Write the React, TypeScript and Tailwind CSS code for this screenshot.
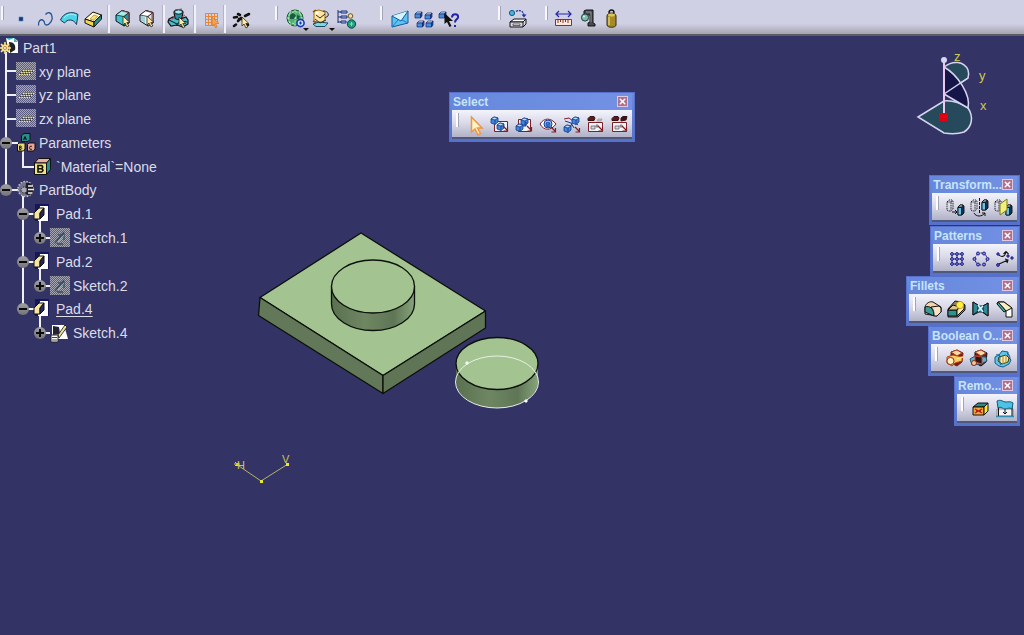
import { useState, type ReactNode } from 'react';
import { X } from 'lucide-react';

function Tool({ label, children }: { label: string; children: ReactNode }) {
  return (
    <button type="button" aria-label={label} className="w-6 h-6 shrink-0 hover:bg-white/40">
      <svg viewBox="0 0 24 24" className="w-6 h-6 overflow-visible" fill="none" stroke="#111" strokeWidth="1">
        {children}
      </svg>
    </button>
  );
}

function Grip() {
  return <div className="w-[3px] h-3.5 mt-1 self-start shrink-0 bg-[#f6f6fc] border-r border-[#a4a4b8]" />;
}

function Divider() {
  return <div className="w-[3px] h-7 shrink-0 bg-[#f0f0f8] border-l border-[#b4b4c4]" />;
}

function Cursor({ x, y, fill = '#ffe9a8' }: { x: number; y: number; fill?: string }) {
  return (
    <path
      transform={`translate(${x} ${y})`}
      d="M0 0v9l2-2 2 4 1.800-1-2-3.500h3z"
      fill={fill}
      stroke="#332a10"
      strokeWidth=".8"
    />
  );
}

function Cube({ x, y, fill = '#3f8fe0' }: { x: number; y: number; fill?: string }) {
  return (
    <g transform={`translate(${x} ${y})`} stroke="#14246e" strokeWidth=".7">
      <path d="M0 2l2-2h5l-1.500 2z" fill="#c8ecfc" />
      <path d="M0 2h5.500v4H0z" fill={fill} />
      <path d="M5.500 2L7 0v4L5.500 6z" fill="#1d4aa8" />
    </g>
  );
}

// small faceted cube, smaller and rounder than the component cubes
function Gem({ x, y }: { x: number; y: number }) {
  return (
    <g transform={`translate(${x} ${y})`} stroke="#173a8c" strokeWidth=".8">
      <path d="M0 2l3-2 4 1v4L4 7.500 0 6z" fill="#3c86dc" />
      <path d="M0 2l3-2 4 1-3 2z" fill="#b8dcf8" />
      <path d="M4 3v4.500" />
    </g>
  );
}

function MainToolbar() {
  return (
    <header className="h-9 w-full overflow-hidden flex items-start bg-linear-to-b from-[#d0d0e4] from-70% to-[#a4a4b0] border-b-2 border-[#5c5c64]">
      <div className="flex items-center h-9 pl-px pt-0.5">
        <Grip />
        <div className="flex ml-[5px] mr-0.5">
          <Tool label="Point">
            <path d="M10 10h4v4h-4z" fill="#15357a" stroke="#4c8cb8" strokeWidth=".6" />
          </Tool>
          <Tool label="Curve">
            <path d="M5.500 18.500C5 14 8 11.500 10.300 13.500S10.500 18 13.500 18s7-5 5.300-9.500C18 5.500 15 4.500 12.500 7.500" stroke="#244f92" strokeWidth="1.300" />
          </Tool>
          <Tool label="Surface">
            <path d="M3.500 13C6 6 15 3.500 21 7.500l-1.500 10C16.500 11.500 10 12 7.500 16z" fill="#4fd5ea" stroke="#163b58" />
            <path d="M7 11c3-4 8-5 12-2.500" stroke="#b5f4fa" />
          </Tool>
          <Tool label="Volume">
            <path d="M4 12l8-7 8.500 3-7.500 7z" fill="#fff7cc" />
            <path d="M4 12l9 3v5l-9-4z" fill="#f4d84a" />
            <path d="M13 15l7.500-7v4L13 20z" fill="#2f8f8c" />
            <path d="M9 12l4-4 3.500 1.300-3.500 4z" fill="#f5df70" stroke="#95782a" strokeWidth=".6" />
          </Tool>
        </div>
        <Divider />
        <div className="flex ml-px mr-[3px]">
          <Tool label="Select solid">
            <path d="M5 8l6-4.500 7 2V16l-5 3-8-5z" fill="#3fc3d0" />
            <path d="M5 8l6-4.500 7 2-5 4z" fill="#a4ecf0" strokeWidth=".7" />
            <path d="M13 9.500l5-4V16l-5 3z" fill="#2793a6" strokeWidth=".7" />
            <path d="M11 4l6 1.500v9" stroke="#b04048" strokeWidth=".8" />
            <Cursor x={12} y={9} />
          </Tool>
          <Tool label="Select element">
            <path d="M5 8l6-4.500 7 2V16l-5 3-8-5z" fill="#d4eef4" />
            <path d="M5 8l6-4.500 7 2-5 4z" fill="#fff" strokeWidth=".7" />
            <path d="M13 9.500l5-4V16l-5 3z" fill="#dcdce6" strokeWidth=".7" />
            <path d="M7 9v5M9 10v6" stroke="#56a4b0" strokeWidth=".8" />
            <path d="M11 4l6 1.500v9" stroke="#8c2830" strokeWidth=".8" />
            <Cursor x={12} y={9} />
          </Tool>
        </div>
        <Divider />
        <div className="flex ml-px mr-[3px]">
          <Tool label="Bodies">
            <path d="M3 12l4-2 7 2 6-2 2 3v4l-5 3-6-2-6 1-3-4z" fill="#48bccc" strokeWidth="1.200" />
            <path d="M3 13l8 4 4-3 6 1M11 17v2" />
            <path d="M8 5c1-3 8-3 9 0l-1 6c-2 2-6 2-7 0z" fill="#2c8fa8" strokeWidth="1.200" />
            <ellipse cx="12.500" cy="5" rx="4" ry="2.200" fill="#9cecf2" />
            <path d="M6 12l3-2M16 10l3-2M9 3l7-1" stroke="#b04048" />
            <Cursor x={13} y={10} />
          </Tool>
        </div>
        <Divider />
        <div className="flex ml-[3px]">
          <Tool label="Grid">
            <path d="M6 6.500h13M6 9.500h13M6 12.500h13M6 15.500h13M6 18.500h10M6.500 6v13M9.500 6v13M12.500 6v13M15.500 6v13M18.500 6v10" stroke="#e8893a" />
            <path d="M13 10v9l2-2 1.500 4 1.500-1-1.300-3.500H20z" fill="#f8a04a" stroke="#e07820" strokeWidth=".7" />
          </Tool>
        </div>
        <Divider />
        <div className="flex ml-[3px] mr-[22px]">
          <Tool label="Point cloud">
            <path d="M5 19l2-1.500M16 9l4-2M5 10.500l3-.5M9 7l2 1M17 17l2 1M9 14l3-3M10 12h3" strokeWidth="2.600" strokeLinecap="round" />
            <Cursor x={13} y={10} />
          </Tool>
        </div>
        <Grip />
        <div className="flex gap-px ml-1.5 mr-[22px]">
          <Tool label="Catalog">
            <circle cx="11" cy="11" r="8" fill="#4fae72" stroke="#1c5634" />
            <path d="M5 7c4-3 8-3 12 0M3 11h16M5 15c3 2 8 2 12 0M11 3v16M7 4c-3 4-3 10 0 14M15 4c3 4 3 10 0 14" stroke="#cdf0c4" strokeWidth=".9" strokeDasharray="2 1.500" />
            <path d="M6 8l3-2 3 2-2 4H6zM13 8l3 1-1 3h-2z" fill="#1b5c44" stroke="none" />
            <circle cx="16.500" cy="16" r="3.600" fill="#bfe4fb" stroke="#1b36b0" strokeWidth="1.600" />
            <path d="M15 16h3M16.500 14.500v3" stroke="#1b36b0" />
            <path d="M19 21h6l-3 3z" fill="#111" stroke="none" />
          </Tool>
          <Tool label="Render">
            <path d="M5 4l5-1 6 2v8l-4 3-7-2z" fill="#fbe6a2" stroke="#9a6b1c" />
            <path d="M4 17l6-2 9 1-3 3.500H7z" fill="#7fd8ea" stroke="#124c5c" />
            <path d="M14 4c4 0 6 2 5 5l-3 2M7 8l4 3 5-4M6 12l5 4 6-3" stroke="#3b2a10" />
            <path d="M4 5l3-2M4 14l3 2" stroke="#7c4c14" strokeWidth="1.500" />
            <circle cx="8" cy="6" r="1.600" fill="#fff" stroke="none" />
            <path d="M20 21h6l-3 3z" fill="#111" stroke="none" />
          </Tool>
          <Tool label="Structure">
            <path d="M4 3v13M4 5h3M4 10h3M4 15h3" stroke="#1b2c74" />
            <path d="M7 4h6v2H7zM7 9h6v2H7zM7 14h5v2H7z" fill="#a9c8f0" stroke="#1b2c74" />
            <circle cx="16.500" cy="9" r="2.300" fill="#f0e0a4" stroke="#6c581c" />
            <circle cx="17.500" cy="17" r="4.200" fill="#1d9a7c" stroke="#0d4c40" />
            <path d="M15.500 17h4M17.500 15v4" stroke="#7fe0c0" />
          </Tool>
        </div>
        <Grip />
        <div className="flex ml-[5px] mr-[38px]">
          <Tool label="Send to">
            <path d="M4 9l16-5v12L4 20z" fill="#5cc4f0" stroke="#1555a0" />
            <path d="M4 9l9 5 7-10" fill="#d6f4fd" stroke="#1555a0" />
            <path d="M4 20l6-7M20 16l-6-3" stroke="#2a78bc" />
          </Tool>
          <Tool label="Components">
            <Cube x={3} y={5} />
            <Cube x={13} y={6} />
            <Cube x={5} y={14} />
            <Cube x={14} y={14} />
          </Tool>
          <Tool label="What's this">
            <Cube x={3} y={5} />
            <path d="M8.500 6v11l2.500-2 2.500 5 2-1-2.500-5h4z" fill="#111" stroke="none" />
            <path d="M16 10.500c0-4.500 7-4.500 6 0-.5 2-3 2-3 5M19 18v2" stroke="#2222b0" strokeWidth="2" />
          </Tool>
        </div>
        <Grip />
        <div className="flex ml-[5px] mr-[15px]">
          <Tool label="Update">
            <circle cx="6" cy="6" r="2.600" fill="#45b6d8" stroke="#16578a" />
            <path d="M10 4.500c4-2 7-1 8 4" stroke="#2030a0" strokeDasharray="2 1" strokeWidth="1.300" />
            <path d="M15.500 7.500h5L18 10.500z" fill="#2030a0" stroke="none" />
            <path d="M4 15l4-3h12l-3 3z" fill="#fff" />
            <path d="M4 15h13v5H4zM17 15l3-3v5l-3 3" fill="#dadae6" />
            <path d="M7 17h7v1.500H7z" fill="#fff" strokeWidth=".6" />
          </Tool>
        </div>
        <Grip />
        <div className="flex ml-[3px]">
          <Tool label="Measure between">
            <path d="M5 7h15M8 4L5 7l3 3M17 4l3 3-3 3" stroke="#2424a8" strokeWidth="1.200" />
            <path d="M4.500 12.500h16v6h-16z" fill="#fbe8dc" stroke="#8a2e28" />
            <path d="M7 13v3M9.500 13v2M12 13v3M14.500 13v2M17 13v3" stroke="#8a2e28" />
          </Tool>
          <Tool label="Measure item">
            <path d="M9 4l2-1h7v13l2 1v2h-7v-3l2-1V8h-4l-2-1z" fill="#4a4c54" />
            <path d="M11 5h5v10" stroke="#8e9098" />
            <circle cx="10" cy="10.500" r="3.600" fill="#7cbcae" stroke="#1f3f3c" />
            <circle cx="9" cy="9.500" r="1" fill="#d8f4ec" stroke="none" />
          </Tool>
          <Tool label="Measure inertia">
            <path d="M10 6c0-4 5-4 5 0" strokeWidth="1.500" />
            <path d="M8 9c0-4 9-4 9 0v9c0 3-9 3-9 0z" fill="#a58a28" stroke="#332a08" />
            <ellipse cx="12.500" cy="8" rx="3.500" ry="1.600" fill="#dcc458" stroke="none" />
            <path d="M10 10v8" stroke="#e0cc68" strokeWidth="1.500" />
          </Tool>
        </div>
      </div>
    </header>
  );
}

function Palette({ title, children }: { title: string; children: ReactNode }) {
  return (
    <section className="bg-linear-to-b from-[#6c8ae0] to-[#5472cc] border border-[#5670cc] px-0.5 pb-0.5 h-[50px] flex flex-col">
      <div className="flex items-center justify-between h-[17px] pl-px pr-1 bg-linear-to-r from-[#6688dc] to-[#7391e4]">
        <h2 className="font-['Liberation_Sans',sans-serif] text-[12px] leading-4 font-bold text-[#c6e4fb] whitespace-nowrap">{title}</h2>
        <button
          type="button"
          aria-label={`Close ${title}`}
          className="w-[11px] h-[11px] shrink-0 bg-[#b0708c] border border-[#e0c8e0] flex items-center justify-center text-white"
        >
          <X size={9} strokeWidth={4} />
        </button>
      </div>
      <div className="flex flex-1 items-end bg-linear-to-b from-[#f4f4fc] via-[#d8d8e8] to-[#b2b2c8] border-b-2 border-[#50587c]">
        <div className="pl-1 pr-[5px] self-start pt-[3px]">
          <div className="w-[3px] h-3.5 bg-white border-r border-[#a4a4b8]" />
        </div>
        {children}
      </div>
    </section>
  );
}

function TrapArrow({ x, y }: { x: number; y: number }) {
  return <path transform={`translate(${x} ${y})`} d="M0 0l4 4M4.500 1v4h-4" stroke="#7c2026" strokeWidth="1.200" />;
}

function SelectPalette() {
  return (
    <Palette title="Select">
      <Tool label="Select">
        <path d="M7.500 4v15l3.500-3 3 6 2.500-1.500-3-5.500H18z" fill="#fff1c8" stroke="#f0963c" strokeWidth="1.500" />
      </Tool>
      <Tool label="Selection trap">
        <path d="M6.500 8.500h13v10h-13z" fill="#f3f3fa" stroke="#7c2026" />
        <Gem x={3} y={4} />
        <Gem x={9} y={10} />
        <TrapArrow x={15} y={13} />
      </Tool>
      <Tool label="Intersecting trap">
        <path d="M6.500 6.500h12v12h-12z" fill="#f3f3fa" stroke="#7c2026" />
        <Gem x={9} y={5} />
        <Gem x={4} y={11} />
        <path d="M14 9v4h-3" stroke="#173a8c" />
        <TrapArrow x={15} y={13} />
      </Tool>
      <Tool label="Polygon trap">
        <path d="M4 11C8 4.500 15 4.500 20 11c-5 7-12 7-16 0z" fill="#fff" stroke="#7c2026" />
        <circle cx="12" cy="11" r="4" fill="#9cccf6" stroke="#173a9c" />
        <path d="M10 10l2-1 2 1v3l-2 1-2-1zM10 10l2 1 2-1M12 11v3" fill="#3f8fe0" stroke="#173a9c" strokeWidth=".7" />
        <TrapArrow x={15} y={14} />
      </Tool>
      <Tool label="Paint stroke">
        <path d="M4 6l5-1 9 7M9 17l4-9 6-3" stroke="#7c2026" />
        <Gem x={12} y={4} />
        <Gem x={4} y={12} />
        <path d="M5 8l6 2 3 5" stroke="#173a8c" />
        <TrapArrow x={15} y={14} />
      </Tool>
      <Tool label="Outside trap">
        <path d="M4.500 9.500h14v9h-14z" fill="#f3f3fa" stroke="#7c2026" />
        <path d="M4 5.500l2-2h4l1 1.500-1 2.500H4z" fill="#5e1820" stroke="#351014" />
        <path d="M14 6h4l-1 2h-4z" fill="#c0c0cc" stroke="#999" strokeWidth=".7" />
        <path d="M7 13h4v3H7zM12 12h2v2h-2z" fill="#d8d8e4" stroke="#666" strokeWidth=".8" />
        <TrapArrow x={14} y={13} />
      </Tool>
      <Tool label="Intersecting outside trap">
        <path d="M4.500 9.500h14v9h-14z" fill="#f3f3fa" stroke="#7c2026" />
        <path d="M4 5.500l2-2h4l1 1.500-1 2.500H4z" fill="#5e1820" stroke="#351014" />
        <path d="M13 5l2-1.500h4L18 7l-5 1z" fill="#3c1418" stroke="#351014" />
        <path d="M7 13h4v3H7zM12 12h2v2h-2z" fill="#d8d8e4" stroke="#666" strokeWidth=".8" />
        <TrapArrow x={14} y={13} />
      </Tool>
    </Palette>
  );
}

function PillOutline({ x }: { x: number }) {
  return <path transform={`translate(${x} 0)`} d="M0 6l2-2h3l1 1v8l-2 2H1l-1-1zM0 6h4v8M4 6l2-1" strokeDasharray="1.500 .8" strokeWidth=".9" />;
}

function PillSolid({ x, y }: { x: number; y: number }) {
  return (
    <g transform={`translate(${x} ${y})`} strokeWidth=".9">
      <path d="M0 2l2-2h3l1 1v7l-2 2H0z" fill="#12345c" />
      <path d="M0 2l2-2h3l-1 2z" fill="#c4f4fb" />
      <path d="M0 2.500h3.500V10H0z" fill="#68c4e4" />
    </g>
  );
}

function SidePalettes() {
  return (
    <div className="absolute right-1 top-[175px] flex flex-col items-end">
      <div className="mb-px">
        <Palette title="Transform...">
          <Tool label="Translate">
            <PillOutline x={3} />
            <PillSolid x={14} y={9} />
            <path d="M8 16h5M11 14l2 2-2 2" />
          </Tool>
          <Tool label="Symmetry">
            <PillOutline x={3} />
            <PillSolid x={14} y={4} />
            <path d="M11.500 2v16" strokeDasharray="3 1" />
            <path d="M6 17c2 4 8 4 11 0M17 20v-3h-3" />
          </Tool>
          <Tool label="Mirror">
            <PillOutline x={3} />
            <PillSolid x={14} y={9} />
            <path d="M8 8l7-5v11l-7 5z" fill="#f3ee7c" stroke="#777a20" />
          </Tool>
        </Palette>
      </div>
      <Palette title="Patterns">
        <Tool label="Rectangular pattern">
          <g fill="#8888dc" stroke="#1c1c84">
            <path d="M6 7h12M6 12h12M6 17h12M7 6v12M12 6v12M17 6v12" />
            {[7, 12, 17].map((y) => [7, 12, 17].map((x) => <circle key={`${x}-${y}`} cx={x} cy={y} r="1.400" />))}
          </g>
        </Tool>
        <Tool label="Circular pattern">
          <g fill="#8888dc" stroke="#1c1c84">
            <circle cx="12" cy="12" r="6" strokeDasharray="3 1.500" fill="none" />
            <circle cx="9" cy="6.500" r="1.500" />
            <circle cx="15" cy="6.500" r="1.500" />
            <circle cx="5.500" cy="12" r="1.500" />
            <circle cx="18.500" cy="12" r="1.500" />
            <circle cx="9" cy="17.500" r="1.500" />
            <circle cx="15" cy="17.500" r="1.500" />
          </g>
        </Tool>
        <Tool label="User pattern">
          <path d="M5 7c3 4 7 3 8-2M10.500 7L13 4.500 15.500 7M6 17l9-4M12 12l3 1-1 3" stroke="#111" strokeWidth="1.100" />
          <g fill="#5a5ac8" stroke="#1c1c84">
            <circle cx="5" cy="7" r="1.200" />
            <circle cx="15" cy="9" r="1.200" />
            <circle cx="5" cy="18" r="1.400" />
            <circle cx="19" cy="11" r="1.200" />
          </g>
        </Tool>
      </Palette>
      <Palette title="Fillets">
        <Tool label="Edge fillet">
          <path d="M4 10c1-4 5-6 8-5l8 5v5l-4 4-12-2z" fill="#f7d4a8" />
          <path d="M4 10c5-2 9 2 9 9l-9-4z" fill="#3a9c98" />
          <path d="M13 19c0-5-1-7-3-9l8-1 2 2v4l-4 4z" fill="#f6e3c4" />
        </Tool>
        <Tool label="Face fillet">
          <path d="M3 12l7-8 6 1 4 3v5l-7 7H3z" fill="#8c8468" />
          <path d="M3 13h9v6H3z" fill="#2f9490" />
          <path d="M12 13l7-6v5l-7 7z" fill="#f4e8b0" />
          <path d="M3 13l5-5 6 2-2 3z" fill="#d8c88c" />
          <circle cx="15" cy="8" r="3.600" fill="#ffee44" stroke="#c09010" strokeWidth=".8" />
        </Tool>
        <Tool label="Tritangent fillet">
          <path d="M4 5l6 4h4l5-3v13l-6-4h-3l-6 3z" fill="#54b8d8" />
          <path d="M4 5v13l5-4V8zM19 6v13l-5-4V9z" fill="#2b8c98" />
          <path d="M9 8l5 7M14 9l-5 5" stroke="#d6f4fa" strokeWidth="1.500" />
        </Tool>
        <Tool label="Chamfer">
          <path d="M5 5h6l8 6v9h-6v-6L4 7z" fill="#fff" />
          <path d="M5 5h6l8 6-6 3z" fill="#f8eebc" />
          <path d="M5 5l8 9-2 1-7-8z" fill="#46b0a8" />
        </Tool>
      </Palette>
      <Palette title="Boolean O...">
        <Tool label="Assemble">
          <path d="M8 5l6-2 6 3-1 9-5 4-6-3z" fill="#6c2018" stroke="#7c2418" />
          <path d="M8 5l6-2 5 3-5 3z" fill="#f9d9a4" stroke="#b03c20" />
          <path d="M4 10l6-2 9 2v4l-7 2-3 3-5-3z" fill="#f7cc62" stroke="#c04018" />
          <circle cx="7.500" cy="14" r="3.600" fill="#fdf0c0" stroke="#8a2c18" />
          <path d="M14 12l6-2" stroke="#fbe08c" strokeWidth="1.500" />
        </Tool>
        <Tool label="Add">
          <path d="M8 5l6-2 6 3-1 9-5 4-6-3z" fill="#6c201c" />
          <path d="M8 5l6-2 5 3-5 3z" fill="#f9d9a4" stroke="#b03c20" />
          <path d="M3 12l5-3 11 1 1 4-6 3-9 1z" fill="#5ab4d0" stroke="#2c4c64" />
          <path d="M8 9l7 1v7l-7-2z" fill="#301414" stroke="#c84828" />
          <circle cx="7" cy="16" r="2.500" fill="#f0c89c" stroke="#84301c" />
        </Tool>
        <Tool label="Remove">
          <path d="M4 10l4-2 3-4 6 1v5l3 3-2 4-6 3-4-1-4-3z" fill="#62c6ea" stroke="#145a86" />
          <path d="M8 10l7-2 3 3-1 4-6 2-4-3z" fill="#f8e9a4" stroke="#3b3812" />
          <path d="M12 9v8M15 8v8" stroke="#a08c3c" />
          <path d="M5 8c2-1 4 0 4 2s-1 6 1 8M16 6c2 1 3 3 3 6" stroke="#145a86" />
        </Tool>
      </Palette>
      <Palette title="Remo...">
        <Tool label="Remove face">
          <path d="M4 10l5-4h10l-4 4z" fill="#2c8c80" />
          <path d="M4 10h11v8H4z" fill="#f4a83c" />
          <path d="M15 10l4-4v8l-4 4z" fill="#ffe630" />
          <path d="M6 12l7 4M13 12l-7 4M7 14h5" stroke="#b81c1c" strokeWidth="1.300" />
        </Tool>
        <Tool label="Replace face">
          <path d="M4 12h16v7H4z" fill="#f4f4f4" stroke="#888" />
          <path d="M5.500 9v10M19 10v9M12 12v5M10 15l2 2 2-2" />
          <path d="M4 4c4-2 6 1 9 1s4-1 7 1l-1 6c-3-2-5 0-7 0s-4-3-7-1z" fill="#4cc2e4" stroke="#135a78" />
          <path d="M3 19.500h18" stroke="#2f8fb0" strokeWidth="1.500" />
        </Tool>
      </Palette>
    </div>
  );
}

type IconName = 'part' | 'plane' | 'params' | 'param' | 'body' | 'pad' | 'hiddenSketch' | 'sketch';

interface TreeRow {
  label: string;
  level: 0 | 1 | 2 | 3;
  icon: IconName;
  toggle?: 'open' | 'closed';
}

const rows: TreeRow[] = [
  { label: 'Part1', level: 0, icon: 'part' },
  { label: 'xy plane', level: 1, icon: 'plane' },
  { label: 'yz plane', level: 1, icon: 'plane' },
  { label: 'zx plane', level: 1, icon: 'plane' },
  { label: 'Parameters', level: 1, icon: 'params', toggle: 'open' },
  { label: '`Material`=None', level: 2, icon: 'param' },
  { label: 'PartBody', level: 1, icon: 'body', toggle: 'open' },
  { label: 'Pad.1', level: 2, icon: 'pad', toggle: 'open' },
  { label: 'Sketch.1', level: 3, icon: 'hiddenSketch', toggle: 'closed' },
  { label: 'Pad.2', level: 2, icon: 'pad', toggle: 'open' },
  { label: 'Sketch.2', level: 3, icon: 'hiddenSketch', toggle: 'closed' },
  { label: 'Pad.4', level: 2, icon: 'pad', toggle: 'open' },
  { label: 'Sketch.4', level: 3, icon: 'sketch', toggle: 'closed' },
];

const indent = ['pl-0', 'pl-0', 'pl-[17px]', 'pl-[34px]'];

const icons: Record<IconName, ReactNode> = {
  part: (
    <>
      <path d="M6 0h8l4 3v12H9z" fill="#fff" />
      <path d="M6 0h8l-5 2zM14 0v4h4z" fill="#3fb4bc" />
      <path d="M9 4c5 0 7 3 6 8l-5 3z" fill="#222" />
      <circle cx="5" cy="10" r="4" fill="#f4dc88" stroke="#8a6a20" />
      <path d="M5 4v3M5 13v3M0 10h2M8 10h3M1 6l2 2M7 12l2 2M9 6L7 8M1 14l2-2" stroke="#f8e498" strokeWidth="1.600" />
      <circle cx="5" cy="10" r="1.500" fill="#fff" stroke="#8a6a20" strokeWidth=".7" />
    </>
  ),
  plane: (
    <>
      <path d="M0 0h20v18H0z" fill="url(#dither)" />
      <path d="M2 13l6-6h11l-5 6z" fill="#77766e" />
      <path d="M3 12.500h11M5 10.500h11M7 8.500h11" stroke="#efe6ac" strokeDasharray="1.500 1" />
      <path d="M4 11.500h11M6 9.500h11" stroke="#2c2c40" strokeDasharray="1 1.500" />
    </>
  ),
  params: (
    <g strokeWidth="1" stroke="#111">
      <path d="M5.500 2.500L8 .5h6v6l-2 2H5.500z" fill="#2b8d88" />
      <path d="M1.500 11.500L3 10h6v6l-1.500 2h-6z" fill="#e8dc78" />
      <path d="M11.500 11.500L13 10h6v6l-1.500 2h-6z" fill="#e9a698" />
      <path d="M7.500 7l1.500-3.500L10.500 7M8 5.800h2" />
      <path d="M3.500 13v3.500H5q1.500-1 0-1.800H3.500 5q1-1 0-1.700zM16 13.300q-2.500-.8-2.500 1.500t2.500 1.500" strokeWidth=".9" />
    </g>
  ),
  param: (
    <g stroke="#111">
      <path d="M1.500 6l4-4.500h12L14 6z" fill="#e9b0a8" />
      <path d="M13.500 6l4-4.500v11l-4 5z" fill="#2c8f8c" />
      <path d="M1.500 6h12v11.500h-12z" fill="#efe28c" />
      <path d="M5 8.500v6.500h3.500q3-1.700 0-3.300H5h3.500q2.500-1.600 0-3.200z" strokeWidth="1.600" />
    </g>
  ),
  body: (
    <>
      <circle cx="9.500" cy="9" r="7.500" fill="#74748c" stroke="#c0c0cc" strokeWidth="1.500" strokeDasharray="1.500 1.500" />
      <path d="M10 3c6-1 8 3 7 8s-6 5-8 2z" fill="#1c1c24" />
      <circle cx="8" cy="10" r="3" fill="#a8a8b8" stroke="#222" strokeDasharray="1.500 1" />
      <path d="M12 6h5M12 9.500h6M12 13h4" stroke="#eee" strokeWidth="1.300" />
    </>
  ),
  pad: (
    <>
      <path d="M2 0h14v17H2z" fill="#16165a" />
      <path d="M7 2h8v15H5z" fill="#fff" />
      <path d="M1 9l5-5h5L7 9v6H1z" fill="#f5e5a0" stroke="#111" />
      <path d="M7 9l4-5v7l-4 4z" fill="#282860" stroke="#111" />
    </>
  ),
  hiddenSketch: (
    <>
      <path d="M0 0h20v19H0z" fill="url(#dither)" />
      <path d="M5 15l9-11M8 7h5M7 16h6M14 5v7" stroke="#3c4c5c" strokeWidth="1.300" />
      <path d="M8 14l6-7" stroke="#88bcc0" />
    </>
  ),
  sketch: (
    <>
      <path d="M2 2h12l4 14H2z" fill="#fff" />
      <path d="M3 3l6 1 1 7-7 1z" fill="#222230" />
      <path d="M15 2l-7 10 1 3 8-11z" fill="#f0e4a0" stroke="#111" strokeWidth=".8" />
      <path d="M1 12h7v7H1z" fill="#fff" stroke="#222" />
      <path d="M2 14.500h5M2 17h5" stroke="#444" />
    </>
  ),
};

function TreeConnectors() {
  return (
    <svg viewBox="0 0 72 310" className="absolute left-0 top-0 w-[72px] h-[310px]" fill="none" stroke="#f0f0f4" strokeWidth="2">
      <defs>
        <pattern id="dither" width="2" height="2" patternUnits="userSpaceOnUse">
          <path d="M0 0h2v2H0z" fill="#5c5c80" stroke="none" />
          <path d="M0 0h1v1H0zM1 1h1v1H1z" fill="#a6a6b4" stroke="none" />
        </pattern>
      </defs>
      <path d="M6 14V154M6 35h10M6 59h10M6 83h10M6 107h12M6 154h12" />
      <path d="M23 112v19h11M23 160v114M23 178h12M23 226h12M23 273h12" />
      <path d="M40 184v18h10M40 232v18h10M40 279v18h10" />
    </svg>
  );
}

function SpecTree() {
  const [selected, setSelected] = useState('Pad.4');

  return (
    <nav aria-label="Specification tree" className="absolute left-0 top-0 font-['Liberation_Sans',sans-serif] text-sm text-[#dcdce8]">
      <TreeConnectors />
      <ul className="relative flex flex-col h-[309px]">
        {rows.map((row) => (
          <li key={row.label} className={`flex flex-1 items-center ${indent[row.level]}`}>
            {row.level > 0 && (
              <span className="w-4 flex shrink-0">
                {row.toggle && (
                  <button
                    type="button"
                    aria-label={row.toggle === 'open' ? `Collapse ${row.label}` : `Expand ${row.label}`}
                    className="w-3 h-3 rounded-full bg-linear-to-b from-[#a0a0a4] to-[#747478]"
                  >
                    <svg viewBox="0 0 12 12" className="w-3 h-3" stroke="#0a0a0a" strokeWidth="2">
                      <path d={row.toggle === 'open' ? 'M2 6h8' : 'M2 6h8M6 2v8'} />
                    </svg>
                  </button>
                )}
              </span>
            )}
            <svg viewBox="0 0 20 20" className="w-5 h-5 shrink-0" fill="none">
              {icons[row.icon]}
            </svg>
            <button
              type="button"
              onClick={() => setSelected(row.label)}
              className={`ml-[3px] leading-5 whitespace-nowrap ${selected === row.label ? 'underline underline-offset-2' : ''}`}
            >
              {row.label}
            </button>
          </li>
        ))}
      </ul>
    </nav>
  );
}

function Model() {
  return (
    <svg viewBox="245 225 310 190" className="absolute left-[245px] top-[189px] w-[310px] h-[190px]" fill="none" stroke="#0c0f0a" strokeWidth="1.300" strokeLinejoin="round">
      <defs>
        <linearGradient id="discSide" x1="0" x2="1" y1="0" y2="0">
          <stop offset="0" stopColor="#5a7050" />
          <stop offset=".4" stopColor="#6e8762" />
          <stop offset=".75" stopColor="#5f7656" />
          <stop offset="1" stopColor="#87a47a" />
        </linearGradient>
      </defs>
      <path d="M361 233l124.500 78L383 375.500 260 297.500z" fill="#a3c490" />
      <path d="M260 297.500l123 78v18L258.500 315.500z" fill="#627858" />
      <path d="M383 375.500L485.500 311v17L383 393.500z" fill="#5f7555" />
      <path d="M331.500 286v18c0 14.600 18.700 26.500 41.500 26.500s41.500-11.900 41.500-26.500v-18z" fill="url(#discSide)" />
      <ellipse cx="373" cy="286.500" rx="41.500" ry="26.500" fill="#a3c490" />
      <path d="M456 363.500v18c0 14.600 18.400 26.500 41 26.500s41-11.900 41-26.500v-18z" fill="url(#discSide)" stroke="none" />
      <ellipse cx="497" cy="363.500" rx="41" ry="26" fill="#a3c490" />
      <ellipse cx="497" cy="382" rx="41.500" ry="26" stroke="#e8efe6" strokeWidth="1" />
      <path d="M466 362h2v2h-2zM525 400h2v2h-2z" fill="#fff" stroke="#fff" strokeWidth="1" />
    </svg>
  );
}

function SketchAxes() {
  return (
    <svg viewBox="0 0 64 36" className="absolute left-[230px] top-[414px] w-16 h-9" fill="none" stroke="#d0d040">
      <path d="M6 14l25 17 27-17" stroke="#b4b468" />
      <path d="M30 30h3v3h-3zM56 13h3v3h-3zM6 13h3v3H6z" fill="#e8e830" stroke="none" />
      <path d="M5 12l4 4M9 12l-4 4M4 14h6" />
      <text x="7" y="19" fill="#c8c848" stroke="none" className="font-['Liberation_Sans',sans-serif] text-[11px]">H</text>
      <text x="52" y="13" fill="#c8c848" stroke="none" className="font-['Liberation_Sans',sans-serif] text-[11px]">V</text>
    </svg>
  );
}

function Compass() {
  return (
    <svg viewBox="0 0 84 92" className="absolute right-[26px] top-[10px] w-[84px] h-[92px]" fill="none" stroke="#d8d4f0" strokeWidth="1.500">
      <path d="M4 71l26-16c11-1 18 3 24 7 6 9 4 19-4 24-6 2-13 2-20 1z" fill="#26495c" />
      <path d="M30 21c9-7 20-6 24 3 1 3 1 5 0 8L30 48z" fill="#26495c" />
      <path d="M30 21c14 8 27 28 24 41L30 48z" fill="#15154a" />
      <path d="M54 32L30 48" />
      <path d="M30 14v56" stroke="#e8c8ec" strokeWidth="2" />
      <circle cx="30" cy="14" r="3" fill="#d8d4f8" stroke="none" />
      <path d="M25 67h9v8h-9z" fill="#e00010" stroke="none" />
      <g fill="#cccc50" stroke="none" className="font-['Liberation_Sans',sans-serif] text-[13px]">
        <text x="40" y="15">z</text>
        <text x="65" y="34">y</text>
        <text x="66" y="64">x</text>
      </g>
    </svg>
  );
}

export default function App() {
  return (
    <div className="flex flex-col h-screen min-h-[480px] bg-[#333366] overflow-hidden">
      <MainToolbar />
      <main className="relative flex-1">
        <SpecTree />
        <Model />
        <SketchAxes />
        <Compass />
        <div className="absolute left-[449px] top-[56px]">
          <SelectPalette />
        </div>
        <div className="absolute inset-x-0 -top-9 h-0">
          <SidePalettes />
        </div>
      </main>
    </div>
  );
}
